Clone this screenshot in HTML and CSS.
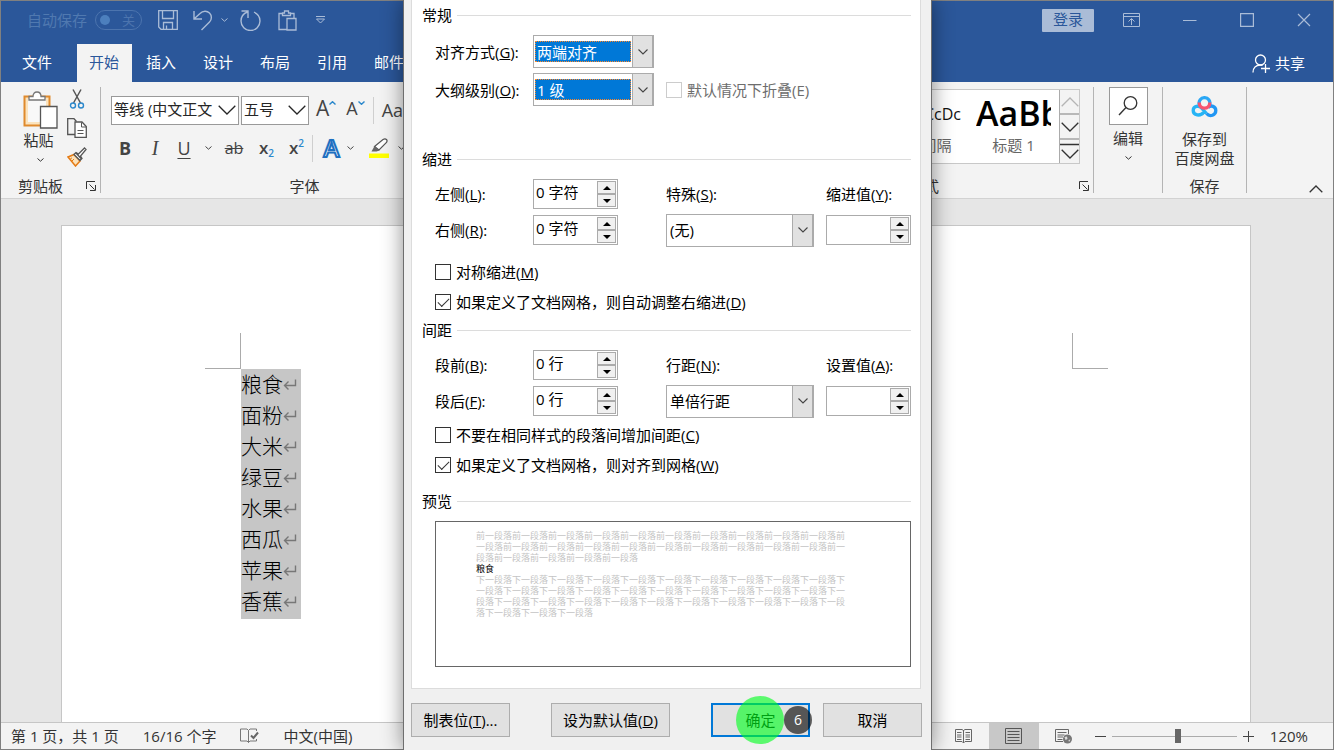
FILE: index.html
```html
<!DOCTYPE html>
<html lang="zh-CN">
<head>
<meta charset="utf-8">
<title>Word</title>
<link rel="stylesheet" href="styles.css">
</head>
<body>
<svg class="defs" aria-hidden="true">
  <symbol id="chev" viewBox="0 0 7 4"><path d="M.5 .5 3.5 3.2 6.5 .5" fill="none" stroke="currentColor"/></symbol>
  <symbol id="chev-lg" viewBox="0 0 18 10"><path d="M.7 .7 9 9 17.3 .7" fill="none" stroke="currentColor" stroke-width="1.3"/></symbol>
  <symbol id="chev-md" viewBox="0 0 10 6"><path d="M.5 .5 5 5 9.5 .5" fill="none" stroke="currentColor" stroke-width="1.1"/></symbol>
  <symbol id="launch" viewBox="0 0 10 10"><path d="M.5 8V.5H9M3.5 3.5 8.5 8.5M9.5 4v5.5H4" fill="none" stroke="currentColor"/></symbol>
  <symbol id="ret" viewBox="0 0 14 12"><path d="M12.500 .5V6.500H1.500M5.500 2.500 1.500 6.500 5.500 10.500" fill="none" stroke="currentColor" stroke-width="1.400"/></symbol>
</svg>

<div class="app">
  <header class="titlebar">
    <span class="autosave">自动保存</span>
    <button class="toggle" aria-label="自动保存开关"><i></i><span>关</span></button>
    <button class="qa save" aria-label="保存"><svg width="20" height="20" viewBox="0 0 20 20"><path d="M.7 .7H19.3V19.3H3L.7 17ZM4.5 .7V8.5H15.5V.7M5.5 19V12.5H14.5V19M8.5 19V15.5" fill="none" stroke="currentColor" stroke-width="1.3"/></svg></button>
    <button class="qa undo" aria-label="撤消"><svg width="20" height="21" viewBox="0 0 20 21"><path d="M1 1V9H9M1.5 8.5 7 3.5C10 .5 14 .5 16.500 3C19 5.500 19 9.500 16.500 12L8.500 20" fill="none" stroke="currentColor" stroke-width="1.4"/></svg></button>
    <button class="qa more" aria-label="更多撤消"><svg width="7" height="4"><use href="#chev"/></svg></button>
    <button class="qa redo" aria-label="重复"><svg width="21" height="21" viewBox="0 0 21 21"><path d="M1.500 1H8V8M7.500 2C3.500 3.500 1 7 1 11A9.500 9.500 0 0 0 20 11C20 7.500 18 4 14 2.200" fill="none" stroke="currentColor" stroke-width="1.4"/></svg></button>
    <button class="qa clip" aria-label="粘贴"><svg width="19" height="21" viewBox="0 0 19 21"><path d="M9 19.500H1V3.500H4.500M12.500 3.500H16V8M4.500 5.500V3H6.500V1H10.500V3H12.500V5.500ZM9 8.500H18V20H9Z" fill="none" stroke="currentColor" stroke-width="1.3"/></svg></button>
    <button class="qa drop" aria-label="自定义快速访问工具栏"><svg width="11" height="8" viewBox="0 0 11 8"><path d="M1 .5H10M1.500 3H9.500L5.500 7Z" fill="none" stroke="currentColor"/></svg></button>
    <div class="window-tools">
      <button class="login">登录</button>
      <button class="win display" aria-label="功能区显示选项"><svg width="17" height="14" viewBox="0 0 17 14"><path d="M.5 .5H16.500V13.500H.5ZM.5 3.500H16.500M8.500 12V6M5.500 8.500 8.500 5.500 11.500 8.500" fill="none" stroke="currentColor"/></svg></button>
      <button class="win min" aria-label="最小化"><svg width="14" height="14" viewBox="0 0 14 14"><path d="M0 7.500H13.500" stroke="currentColor"/></svg></button>
      <button class="win max" aria-label="最大化"><svg width="14" height="14" viewBox="0 0 14 14"><path d="M.6 .6H13.400V13.400H.6Z" fill="none" stroke="currentColor" stroke-width="1.200"/></svg></button>
      <button class="win" aria-label="关闭"><svg width="14" height="14" viewBox="0 0 14 14"><path d="M1 1 13 13M13 1 1 13" stroke="currentColor" stroke-width="1.200"/></svg></button>
    </div>
  </header>

  <nav class="tabs">
    <button class="tab file">文件</button>
    <button class="tab active">开始</button>
    <button class="tab">插入</button>
    <button class="tab">设计</button>
    <button class="tab">布局</button>
    <button class="tab">引用</button>
    <button class="tab">邮件</button>
    <button class="share"><svg width="19" height="19" viewBox="0 0 19 19"><circle cx="8.500" cy="6" r="5" fill="none" stroke="currentColor" stroke-width="1.300"/><path d="M1 18.500C1 14 4 11 8.500 11C9.500 11 10 11.200 10.500 11.500M13.500 10V19M9 14.500H18" fill="none" stroke="currentColor" stroke-width="1.300"/></svg>共享</button>
  </nav>

  <section class="ribbon">
    <div class="group clipboard">
      <div class="body">
        <button class="big paste">
          <svg width="35" height="38" viewBox="0 0 35 38"><path d="M1.500 5.500H26.500V34.500H1.500Z" fill="#fbe3bd" stroke="#e08a2c" stroke-width="2"/><path d="M5 8H23V31H5Z" fill="#f8f8f8"/><path d="M6 9V5.500H10C10 2.500 11.500 1 14 1S18 2.500 18 5.500H22V9Z" fill="#fff" stroke="#777" stroke-width="1.300"/><path d="M17.500 15.500H34V37H17.500Z" fill="#fff" stroke="#555" stroke-width="1.300"/></svg>
          <span>粘贴</span>
          <svg width="7" height="4"><use href="#chev"/></svg>
        </button>
        <div class="clip-tools">
          <button aria-label="剪切"><svg width="16" height="20" viewBox="0 0 16 20"><path d="M4 .5 11.500 14M12 .5 4.500 14" stroke="#555" stroke-width="1.500"/><circle cx="4" cy="16.500" r="2.500" fill="none" stroke="#2b88cc" stroke-width="1.400"/><circle cx="12" cy="16.500" r="2.500" fill="none" stroke="#2b88cc" stroke-width="1.400"/></svg></button>
          <button aria-label="复制"><svg width="20" height="20" viewBox="0 0 20 20"><path d="M8 16.500H.7V.7H7L9.500 3.500" fill="none" stroke="#555" stroke-width="1.300"/><path d="M8 4H15L19.300 8.500V19.300H8Z" fill="#fff" stroke="#555" stroke-width="1.300"/><path d="M14.500 4.500V9H19M10.500 12.500H16.500M10.500 15.500H16.500" fill="none" stroke="#555"/></svg></button>
          <button aria-label="格式刷"><svg width="20" height="20" viewBox="0 0 20 20"><path d="M1 10 7 7.500 13 14 8.500 19Z" fill="#fbe3bd" stroke="#e57b14" stroke-width="1.500"/><path d="M3.500 11.500 5 11M5 14 7 12" stroke="#e57b14"/><path d="M8.500 5.500 14.500 12M7 7.500 9 5.500 11.500 7 17.500 1 19 2.500 13.500 9 15 11.500 13 13.500Z" fill="#fff" stroke="#555" stroke-width="1.300"/></svg></button>
        </div>
      </div>
      <div class="caption"><span>剪贴板</span><button class="launch" aria-label="剪贴板选项"><svg width="10" height="10"><use href="#launch"/></svg></button></div>
    </div>

    <div class="group font">
      <div class="font-row top">
        <label class="pick family"><select aria-label="字体"><option>等线 (中文正文</option></select><svg width="18" height="10"><use href="#chev-lg"/></svg></label>
        <label class="pick size"><select aria-label="字号"><option>五号</option></select><svg width="18" height="10"><use href="#chev-lg"/></svg></label>
        <button class="grow">A<svg width="7" height="4" viewBox="0 0 7 4"><path d="M.5 3.500 3.500 .7 6.500 3.500" fill="none" stroke="#2b88cc" stroke-width="1.400"/></svg></button>
        <button class="grow shrink">A<svg width="7" height="4" viewBox="0 0 7 4"><path d="M.5 .5 3.500 3.300 6.500 .5" fill="none" stroke="#2b88cc" stroke-width="1.400"/></svg></button>
        <i class="rule"></i>
        <button class="case">Aa</button>
      </div>
      <div class="font-row marks">
        <button class="b">B</button>
        <button class="i">I</button>
        <button class="und">U</button>
        <button class="chev" aria-label="下划线样式"><svg width="7" height="4"><use href="#chev"/></svg></button>
        <button class="strike">ab</button>
        <button class="x">x<sub>2</sub></button>
        <button class="x">x<sup>2</sup></button>
        <i class="rule"></i>
        <button class="effect">A</button>
        <button class="chev" aria-label="文本效果选项"><svg width="7" height="4"><use href="#chev"/></svg></button>
        <button class="hilite" aria-label="突出显示"><svg width="20" height="20" viewBox="0 0 20 20"><path d="M0 15.500H20V20H0Z" fill="#ff0"/><path d="M5.500 8.500 14 1.500C17 0 19 2 17.500 4.500L10 12Z" fill="#fff" stroke="#555" stroke-width="1.200"/><path d="M5.500 8 10.500 12.500 7.500 13.500H2.500Z" fill="#666"/></svg></button>
        <button class="chev" aria-label="突出显示颜色"><svg width="7" height="4"><use href="#chev"/></svg></button>
      </div>
      <div class="caption"><span>字体</span></div>
    </div>

    <div class="group styles">
      <div class="gallery">
        <button class="style"><span class="sample">AaBbCcDc</span><span class="name">无间隔</span></button>
        <button class="style heading"><span class="sample">AaBb</span><span class="name">标题 1</span></button>
        <div class="scroll">
          <button class="off" aria-label="上一行"><svg width="18" height="10" viewBox="0 0 18 10"><path d="M.7 9.300 9 1 17.300 9.300" fill="none" stroke="currentColor" stroke-width="1.300"/></svg></button>
          <button aria-label="下一行"><svg width="18" height="10"><use href="#chev-lg"/></svg></button>
          <button aria-label="更多样式"><svg width="20" height="17" viewBox="0 0 20 17"><path d="M0 1.500H20M1.700 6.700 10 15 18.300 6.700" fill="none" stroke="currentColor" stroke-width="1.300"/></svg></button>
        </div>
      </div>
      <div class="caption"><span>样式</span><button class="launch" aria-label="样式选项"><svg width="10" height="10"><use href="#launch"/></svg></button></div>
    </div>

    <div class="group edit">
      <button class="big">
        <span class="frame"><svg width="20" height="20" viewBox="0 0 20 20"><circle cx="12.500" cy="7" r="6.300" fill="none" stroke="currentColor" stroke-width="1.300"/><path d="M8 11.500 1 19" stroke="currentColor" stroke-width="1.400"/></svg></span>
        <span>编辑</span>
        <svg width="7" height="4"><use href="#chev"/></svg>
      </button>
    </div>

    <div class="group netdisk">
      <button class="big">
        <svg width="27" height="22" viewBox="0 0 27 22"><g fill="none" stroke-width="3.300"><path d="M8.300 8.500A5.400 5.400 0 1 1 18.700 8.500" stroke="#2aa7f5"/><path d="M12.500 16.500C9.500 20.500 2.200 19.500 2.200 14.500C2.200 10 8 9 10.500 12L15.500 17.500" stroke="#26b4f5"/><path d="M15.500 17.500C19 21.500 24.800 19 24.800 14.500C24.800 10.500 20 8.500 17 11.500" stroke="#2196f3"/><path d="M8.200 6.500C8.200 14 18.800 14 18.800 6.500" stroke="#f8536f"/></g></svg>
        <span>保存到<br>百度网盘</span>
      </button>
      <div class="caption"><span>保存</span></div>
    </div>

    <button class="collapse" aria-label="折叠功能区"><svg width="14" height="8" viewBox="0 0 14 8"><path d="M.7 7.300 7 1 13.300 7.300" fill="none" stroke="currentColor" stroke-width="1.300"/></svg></button>
  </section>

  <main class="workspace">
    <article class="page">
      <div class="crops"><i class="crop left"></i><i class="crop right"></i></div>
      <div class="selection">
        <p>粮食<svg width="14" height="12"><use href="#ret"/></svg></p>
        <p>面粉<svg width="14" height="12"><use href="#ret"/></svg></p>
        <p>大米<svg width="14" height="12"><use href="#ret"/></svg></p>
        <p>绿豆<svg width="14" height="12"><use href="#ret"/></svg></p>
        <p>水果<svg width="14" height="12"><use href="#ret"/></svg></p>
        <p>西瓜<svg width="14" height="12"><use href="#ret"/></svg></p>
        <p>苹果<svg width="14" height="12"><use href="#ret"/></svg></p>
        <p>香蕉<svg width="14" height="12"><use href="#ret"/></svg></p>
      </div>
    </article>
  </main>

  <footer class="status">
    <span>第 1 页，共 1 页</span>
    <span>16/16 个字</span>
    <svg width="19" height="16" viewBox="0 0 19 16"><path d="M8.500 14.500 7 13H.5V1H7L8.500 2.500ZM8.500 2.500 10 1H16.500V3M8.500 14.500 10 13H16.500V11" fill="none" stroke="#777"/><path d="M11 7.500 13.500 10 18 4.500" fill="none" stroke="#666" stroke-width="2"/></svg>
    <span>中文(中国)</span>
    <div class="views">
      <button class="view" aria-label="阅读视图"><svg width="17" height="16" viewBox="0 0 17 16"><path d="M8.500 2.500 7 1.500H.5V13.500H7L8.500 15 10 13.500H16.500V1.500H10ZM8.500 2V15M2 4.500H6.500M2 7H6.500M2 9H6.500M2 11.500H6.500M10.500 4.500H15M10.500 7H15M10.500 9H15M10.500 11.500H15" fill="none" stroke="#666"/></svg></button>
      <button class="view on" aria-label="页面视图"><svg width="17" height="16" viewBox="0 0 17 16"><path d="M.5 .5H16.500V15.500H.5ZM2.500 3.500H14.500M2.500 6.500H14.500M2.500 9.500H14.500M2.500 12.500H14.500" fill="none" stroke="#555"/></svg></button>
      <button class="view" aria-label="Web 版式视图"><svg width="17" height="16" viewBox="0 0 17 16"><path d="M8 13.500H.5V1.500H13.500V6M2.500 4.500H11.500M2.500 7H9.500M2.500 9H8M2.500 11.500H7.500" fill="none" stroke="#666"/><circle cx="12.500" cy="11" r="4.500" fill="#777"/><path d="M9.500 9 12 8.500 12.500 11 10.500 12ZM13.500 12 15.500 11.500 14 14Z" fill="#ddd"/></svg></button>
      <button class="step" aria-label="缩小"><svg width="11" height="11" viewBox="0 0 11 11"><path d="M0 5.500H11" stroke="#444"/></svg></button>
      <input type="range" min="0" max="100" value="53" aria-label="缩放">
      <button class="step" aria-label="放大"><svg width="11" height="11" viewBox="0 0 11 11"><path d="M0 5.500H11M5.500 0V11" stroke="#444"/></svg></button>
      <button class="zoom">120%</button>
    </div>
  </footer>
</div>

<div class="overlay">
  <form class="dialog" role="dialog" aria-label="段落">
    <div class="panel">
      <h2 class="first">常规</h2>
      <div class="fields general">
        <label for="align">对齐方式(<u>G</u>):</label>
        <span class="combo lit"><select id="align"><option>两端对齐</option></select><span class="arrow"><svg width="10" height="6"><use href="#chev-md"/></svg></span></span>
        <span></span>
        <label for="level">大纲级别(<u>O</u>):</label>
        <span class="combo lit"><select id="level"><option>1 级</option></select><span class="arrow"><svg width="10" height="6"><use href="#chev-md"/></svg></span></span>
        <label class="check off"><input type="checkbox" disabled>默认情况下折叠(E)</label>
      </div>

      <h2>缩进</h2>
      <div class="fields metric">
        <label for="left">左侧(<u>L</u>):</label>
        <span class="spin"><input type="text" id="left" value="0 字符"><span class="keys"><button type="button" aria-label="增加"></button><button type="button" aria-label="减少"></button></span></span>
        <label for="special">特殊(<u>S</u>):</label>
        <label for="by">缩进值(<u>Y</u>):</label>
        <label for="right">右侧(<u>R</u>):</label>
        <span class="spin"><input type="text" id="right" value="0 字符"><span class="keys"><button type="button" aria-label="增加"></button><button type="button" aria-label="减少"></button></span></span>
        <span class="combo wide"><select id="special"><option>(无)</option></select><span class="arrow"><svg width="10" height="6"><use href="#chev-md"/></svg></span></span>
        <span class="spin"><input type="text" id="by" value=""><span class="keys"><button type="button" aria-label="增加"></button><button type="button" aria-label="减少"></button></span></span>
      </div>
      <div class="checks roomy">
        <label class="check"><input type="checkbox"><span>对称缩进(<u>M</u>)</span></label>
        <label class="check"><input type="checkbox" checked><span>如果定义了文档网格，则自动调整右缩进(<u>D</u>)</span></label>
      </div>

      <h2>间距</h2>
      <div class="fields metric">
        <label for="before">段前(<u>B</u>):</label>
        <span class="spin"><input type="text" id="before" value="0 行"><span class="keys"><button type="button" aria-label="增加"></button><button type="button" aria-label="减少"></button></span></span>
        <label for="line">行距(<u>N</u>):</label>
        <label for="at">设置值(<u>A</u>):</label>
        <label for="after">段后(<u>F</u>):</label>
        <span class="spin"><input type="text" id="after" value="0 行"><span class="keys"><button type="button" aria-label="增加"></button><button type="button" aria-label="减少"></button></span></span>
        <span class="combo wide"><select id="line"><option>单倍行距</option></select><span class="arrow"><svg width="10" height="6"><use href="#chev-md"/></svg></span></span>
        <span class="spin"><input type="text" id="at" value=""><span class="keys"><button type="button" aria-label="增加"></button><button type="button" aria-label="减少"></button></span></span>
      </div>
      <div class="checks">
        <label class="check"><input type="checkbox"><span>不要在相同样式的段落间增加间距(<u>C</u>)</span></label>
        <label class="check"><input type="checkbox" checked><span>如果定义了文档网格，则对齐到网格(<u>W</u>)</span></label>
      </div>

      <h2>预览</h2>
      <div class="preview">
        <p>前一段落前一段落前一段落前一段落前一段落前一段落前一段落前一段落前一段落前一段落前一段落前一段落前一段落前一段落前一段落前一段落前一段落前一段落前一段落前一段落前一段落前一段落前一段落前一段落前一段落</p>
        <p class="now">粮食</p>
        <p>下一段落下一段落下一段落下一段落下一段落下一段落下一段落下一段落下一段落下一段落下一段落下一段落下一段落下一段落下一段落下一段落下一段落下一段落下一段落下一段落下一段落下一段落下一段落下一段落下一段落下一段落下一段落下一段落下一段落下一段落下一段落下一段落下一段落下一段落</p>
      </div>
    </div>
    <div class="actions">
      <button type="button" class="act">制表位(<u>T</u>)...</button>
      <button type="button" class="act default">设为默认值(<u>D</u>)</button>
      <button type="button" class="act primary">确定<span class="pulse"></span><span class="count">6</span></button>
      <button type="button" class="act cancel">取消</button>
    </div>
  </form>
</div>
</body>
</html>
```
FILE: styles.css
```css
* { box-sizing: border-box; }
body {
  margin: 0;
  font: 15px/20px "Open Sans", "Noto Sans CJK SC", sans-serif;
  color: #262626;
}
button, input, select { font: inherit; color: inherit; margin: 0; }
button { border: 0; padding: 0; background: none; white-space: nowrap; }
select { appearance: none; border: 0; border-radius: 0; background: none; min-width: 0; outline: 0; }
p, h2 { margin: 0; }
svg { display: block; flex: none; }
.defs { position: absolute; width: 0; height: 0; }

.app {
  height: 100vh;
  display: flex;
  flex-direction: column;
  overflow: hidden;
  border: 1px solid #808080;
  background: #f3f3f3;
}

/* title bar */
.titlebar {
  flex: none;
  height: 43px;
  padding: 0 22px 5px 26px;
  display: flex;
  align-items: center;
  background: #2b579a;
  color: #aabcd7;
}
.autosave { color: #5079b0; }
.toggle {
  display: flex;
  align-items: center;
  justify-content: space-between;
  width: 47px;
  height: 20px;
  margin-left: 8px;
  padding: 0 6px 0 4px;
  border: 1px solid #4c74ae;
  border-radius: 10px;
  color: #4c74ae;
  font-size: 13px;
  line-height: 18px;
}
.toggle i { width: 10px; height: 10px; border-radius: 50%; background: #4c7fbd; }
.save { margin-left: 16px; }
.undo { margin-left: 15px; }
.more { margin-left: 8px; }
.redo { margin-left: 12px; }
.clip { margin-left: 17px; }
.drop { margin-left: 18px; }
.window-tools { margin-left: auto; display: flex; align-items: center; }
.login {
  width: 52px;
  height: 23px;
  margin-right: 29px;
  padding-bottom: 2px;
  border-radius: 1px;
  background: #aabcd7;
  color: #2b579a;
}
.display { margin-right: 43px; }
.min, .max { margin-right: 43px; }

/* tabs */
.tabs {
  flex: none;
  height: 38px;
  display: flex;
  gap: 2px;
  padding: 0 28px 0 9px;
  background: #2b579a;
  color: #fff;
}
.tab { width: 55px; padding: 0 1px 2px 0; }
.tab.file { margin-right: 10px; }
.tab.active { background: #f3f3f3; color: #2b579a; }
.share { margin-left: auto; display: flex; align-items: center; gap: 4px; }

/* ribbon */
.ribbon {
  flex: none;
  height: 117px;
  display: flex;
  padding: 5px 10px 5px 0;
  border-bottom: 1px solid #d2d2d2;
  background: #f3f3f3;
  color: #333;
}
.group { display: flex; flex-direction: column; border-right: 1px solid #b4b4b4; }
.caption { display: flex; justify-content: center; align-items: center; height: 20px; margin-top: auto; margin-bottom: -3px; }
.big { display: flex; flex-direction: column; align-items: center; }
.clipboard { width: 100px; }
.clipboard .body { display: flex; gap: 9px; padding: 2px 0 0 22px; }
.paste { padding-top: 2px; }
.paste span { margin: 1px 0 8px -4px; }
.clip-tools { display: flex; flex-direction: column; align-items: center; gap: 9px; }
.clipboard .caption { justify-content: space-between; padding: 0 4px 0 17px; }
.font { width: 398px; padding-left: 10px; }
.font-row { display: flex; align-items: center; }
.font-row.top { padding-top: 8px; }
.pick {
  display: flex;
  align-items: center;
  height: 29px;
  margin-right: 2px;
  padding: 0 2px;
  border: 1px solid #999;
  background: #fff;
  color: #262626;
}
.pick select { flex: 1; padding: 0 0 2px; height: 26px; }
.family { width: 128px; }
.size { width: 68px; }
.grow { display: flex; align-items: flex-start; margin: 0 0 4px 5px; font-size: 21px; line-height: 26px; color: #444; }
.grow svg { margin-top: 6px; }
.shrink { margin-left: 10px; font-size: 18px; }
.rule { width: 1px; height: 27px; background: #cfcfcf; }
.top .rule { margin: 0 8px; }
.case { font-size: 18px; color: #444; }
.marks { height: 28px; padding: 0 0 0 5px; margin-top: 9px; color: #444; font-size: 18px; }
.marks button { width: 29px; display: flex; justify-content: center; }
.marks .chev { width: 16px; }
.marks .b { width: 18px; font-weight: 700; }
.marks .i { width: 42px; font-family: "Liberation Serif", serif; font-style: italic; font-size: 20px; }
.marks .und { width: 16px; text-decoration: underline; text-underline-offset: 3px; }
.marks .und + .chev { width: 32px; }
.marks .strike { width: 20px; font-size: 16px; text-decoration: line-through; }
.marks .x { margin-left: 15px; width: 15px; font-weight: 600; font-size: 17px; }
.marks .x + .x { margin-left: 15px; }
.x sub, .x sup { font-size: 10px; line-height: 10px; color: #2b88cc; }
.x sub { align-self: flex-end; }
.marks .rule { margin: 0 8px; }
.marks .effect {
  width: 21px;
  font-size: 24px;
  line-height: 28px;
  font-weight: 600;
  color: #fff;
  -webkit-text-stroke: 2px #1e6fc0;
  text-shadow: 0 0 2px #7cbcf0;
}
.marks .hilite { width: 20px; margin-left: 11px; }
.marks .hilite + .chev { width: 24px; }
.styles { flex: 1; align-items: stretch; min-width: 0; padding-right: 13px; }
.gallery {
  display: flex;
  justify-content: flex-end;
  height: 75px;
  margin-top: 2px;
  border: 1px solid #c8c8c8;
  background: #fff;
  overflow: hidden;
}
.style { display: flex; flex-direction: column; align-items: center; width: 90px; margin-right: 9px; color: #666; }
.sample {
  width: 100%;
  height: 44px;
  display: flex;
  justify-content: flex-end;
  align-items: center;
  overflow: hidden;
  color: #111;
  font-size: 16px;
}
.style:first-child { width: 110px; padding-top: 3px; margin-right: 15px; }
.style:first-child .sample { height: 42px; }
.style:first-child .name { padding-left: 46px; }
.style.heading { width: 75px; }
.heading .sample { justify-content: flex-start; font-size: 34px; font-weight: 600; height: 45px; color: #000; }
.scroll { display: flex; flex-direction: column; width: 21px; margin: -1px; border: 1px solid #ababab; background: #f3f3f3; }
.scroll button { flex: 1; display: flex; justify-content: center; align-items: center; border-bottom: 2px solid #b8b8b8; color: #333; overflow: hidden; }
.scroll button:last-child { border-bottom: 0; }
.scroll .off { color: #b5b5b5; }
.styles .caption { justify-content: flex-end; gap: 140px; margin-right: -9px; }
.edit { width: 69px; align-items: center; }
.frame { display: flex; justify-content: center; align-items: center; width: 39px; height: 38px; border: 1px solid #999; background: #fff; margin-bottom: 3px; }
.edit .big > svg { margin-top: 8px; }
.netdisk { width: 84px; }
.netdisk .big { padding-top: 9px; }
.netdisk .big span { line-height: 19px; margin-top: 12px; }
.collapse { margin-left: 62px; align-self: flex-end; }

/* document */
.workspace { flex: 1; min-height: 0; display: flex; padding: 26px 82px 0 60px; background: #e6e6e6; }
.page { flex: 1; border: 1px solid #c6c6c6; border-bottom: 0; background: #fff; padding: 107px 142px 0 143px; }
.crops { display: flex; justify-content: space-between; }
.crop { width: 36px; height: 36px; border: 0 solid #ababab; border-bottom-width: 1px; }
.crop.left { border-right-width: 1px; }
.crop.right { border-left-width: 1px; }
.selection { width: 60px; margin-left: 36px; padding-bottom: 2px; background: #c6c6c6; color: #000; }
.selection p { display: flex; align-items: center; height: 31px; font-size: 21px; line-height: 31px; font-weight: 300; }
.selection svg { color: #777; }

/* status bar */
.status {
  flex: none;
  height: 27px;
  display: flex;
  align-items: center;
  gap: 24px;
  padding: 0 25px 0 10px;
  border-top: 1px solid #c6c6c6;
  color: #333;
}
.views { margin-left: auto; align-self: stretch; display: flex; align-items: center; }
.view { width: 50px; height: 100%; display: flex; align-items: center; justify-content: center; }
.view.on { background: #c8c8c8; }
.views .step { margin: 0 6px; }
.step:first-of-type { margin-left: 7px; }
input[type=range] { appearance: none; width: 125px; height: 14px; margin: 0; background: linear-gradient(#ababab, #ababab) center / 100% 1px no-repeat; }
input[type=range]::-webkit-slider-thumb { appearance: none; width: 6px; height: 14px; background: #666; }
.zoom { margin-left: 10px; }

/* paragraph dialog */
.overlay { position: absolute; inset: 0; display: flex; justify-content: center; padding-left: 1px; overflow: hidden; pointer-events: none; }
.dialog {
  width: 529px;
  padding: 0 10px 0 7px;
  border: 0 solid #6e6e6e;
  border-width: 0 1px;
  background: #f0f0f0;
  box-shadow: 0 0 20px rgba(0, 0, 0, .45);
  color: #000;
  pointer-events: auto;
}
.panel { border: 1px solid #dcdcdc; border-top: 0; background: #fff; padding: 0 9px 21px 10px; }
.panel h2 { display: flex; align-items: center; gap: 5px; font-size: 15px; line-height: 20px; font-weight: 400; }
.panel h2::after { content: ""; flex: 1; height: 1px; background: #dcdcdc; }
.panel h2.first { padding-top: 5px; }
.fields { display: grid; align-items: center; padding-left: 13px; }
.general { grid-template-columns: 98px 133px 1fr; row-gap: 5px; margin: 10px 0 43px; }
.metric { grid-template-columns: 98px 133px 160px 1fr; grid-auto-rows: 30px; row-gap: 6px; margin-top: 10px; }
.combo { display: flex; align-items: center; width: 121px; height: 33px; padding-left: 1px; border: 1px solid #ababab; background: #fff; }
.combo.wide { width: 148px; }
.combo select { flex: 1; height: 21px; padding: 0 0 0 2px; line-height: 20px; }
.combo.lit select { background: #0078d7; color: #fff; padding: 0 1px; border: 1px dotted #ff8728; }
.arrow { display: flex; align-items: center; justify-content: center; align-self: stretch; width: 21px; margin-left: 1px; border: 1px solid #ababab; border-width: 0 1px 0 1px; background: #e1e1e1; color: #444; }
.spin { display: flex; width: 85px; height: 30px; padding: 1px; border: 1px solid #ababab; background: #fff; }
.spin input { flex: 1; min-width: 0; padding: 0 0 4px 1px; border: 0; outline: 0; background: none; }
.keys { display: flex; flex-direction: column; width: 19px; }
.keys button { flex: 1; border: 1px solid #ababab; background: #f0f0f0; display: flex; align-items: center; justify-content: center; }
.keys button::before { content: ""; border: 4px solid transparent; border-top-width: 0; border-bottom-color: #000; }
.keys button + button::before { border-width: 4px 4px 0; border-top-color: #000; }
.checks { padding-left: 13px; margin: 4px 0 11px; }
.checks.roomy { margin: 12px 0 3px; }
.check { display: flex; align-items: center; height: 30px; gap: 5px; }
.check input { appearance: none; flex: none; width: 16px; height: 16px; border: 1px solid #333; background: #fff; display: flex; }
.check input:checked::before { content: ""; width: 10px; height: 5px; margin: 3px 0 0 2px; border: 1px solid #333; border-width: 0 0 1px 1px; rotate: -45deg; }
.check.off { color: #6d6d6d; }
.check.off input { border-color: #ccc; }
.preview { height: 146px; margin: 10px 0 0 13px; padding: 8px 64px 0 40px; border: 1px solid #666; font-size: 9px; line-height: 11px; color: #c4c4c4; word-break: break-all; }
.preview .now { color: #000; }
.actions { display: flex; margin: 14px -1px 0 0; }
.act { width: 99px; height: 34px; border: 1px solid #adadad; background: #e1e1e1; }
.act.default { width: 119px; margin: 0 41px; }
.act.cancel { margin-left: auto; }
.primary { position: relative; border: 2px solid #0078d7; }
.pulse { position: absolute; width: 48px; height: 48px; left: 23px; top: -9px; border-radius: 50%; background: rgba(0, 255, 30, .62); }
.count { position: absolute; width: 28px; height: 28px; left: 71px; top: 1px; border-radius: 50%; background: rgba(0, 0, 0, .62); color: #fff; line-height: 28px; font-size: 14px; }
```
